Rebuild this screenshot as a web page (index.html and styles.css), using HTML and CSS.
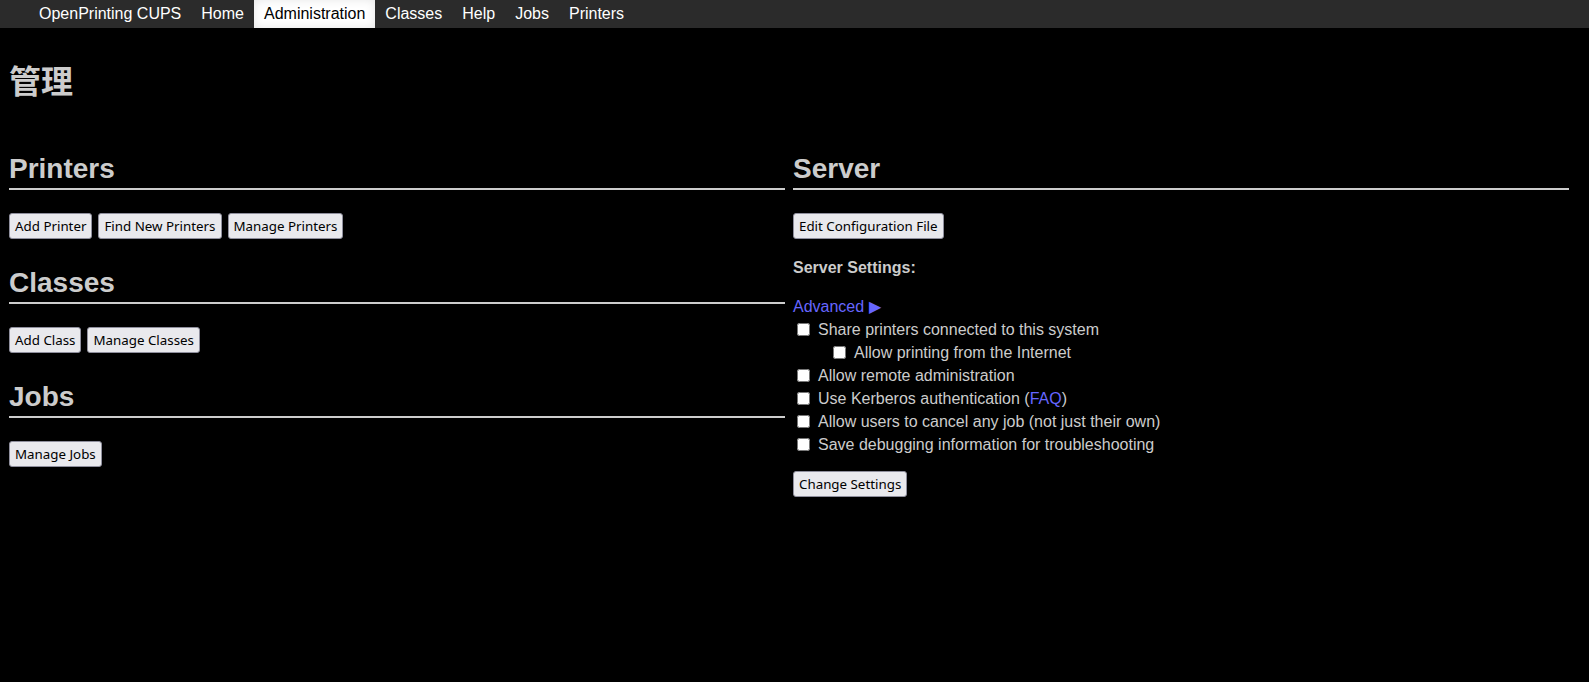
FILE: index.html
```html
<!DOCTYPE html>
<html lang="en">
<head>
<meta charset="utf-8">
<title>管理 - CUPS</title>
<link rel="stylesheet" href="styles.css">
</head>
<body>
<div class="header">
  <ul class="nav">
    <li><a href="#">OpenPrinting CUPS</a></li>
    <li><a href="#">Home</a></li>
    <li><a href="#" class="active">Administration</a></li>
    <li><a href="#">Classes</a></li>
    <li><a href="#">Help</a></li>
    <li><a href="#">Jobs</a></li>
    <li><a href="#">Printers</a></li>
  </ul>
</div>
<div class="main">
  <h1 class="page-title">管理</h1>
  <div class="row">
    <div class="col">
      <h2 class="title">Printers</h2>
      <div class="buttons">
        <button class="btn">Add Printer</button>
        <button class="btn">Find New Printers</button>
        <button class="btn">Manage Printers</button>
      </div>
      <h2 class="title">Classes</h2>
      <div class="buttons">
        <button class="btn">Add Class</button>
        <button class="btn">Manage Classes</button>
      </div>
      <h2 class="title">Jobs</h2>
      <div class="buttons">
        <button class="btn">Manage Jobs</button>
      </div>
    </div>
    <div class="col">
      <h2 class="title">Server</h2>
      <div class="buttons server-buttons">
        <button class="btn">Edit Configuration File</button>
      </div>
      <p class="settings-title">Server Settings:</p>
      <a class="advanced" href="#">Advanced ▶</a>
      <div class="checks">
        <label class="check"><input type="checkbox">Share printers connected to this system</label>
        <label class="check indent"><input type="checkbox">Allow printing from the Internet</label>
        <label class="check"><input type="checkbox">Allow remote administration</label>
        <label class="check"><input type="checkbox">Use Kerberos authentication (<a class="link" href="#">FAQ</a>)</label>
        <label class="check"><input type="checkbox">Allow users to cancel any job (not just their own)</label>
        <label class="check"><input type="checkbox">Save debugging information for troubleshooting</label>
      </div>
      <div class="buttons submit">
        <button class="btn">Change Settings</button>
      </div>
    </div>
  </div>
</div>
</body>
</html>
```
FILE: styles.css
```css
html, body {
  margin: 0;
  padding: 0;
  background: #000;
}
body {
  color: #ccc;
  font-family: "Liberation Sans", Arial, sans-serif;
  font-size: 16px;
}
.header {
  background: #2b2b2b;
  height: 28px;
}
.nav {
  list-style: none;
  margin: 0;
  padding: 0 0 0 29px;
  display: flex;
}
.nav a {
  display: block;
  padding: 5px 10px;
  color: #fff;
  text-decoration: none;
  line-height: 18px;
}
.nav a.active {
  background: #fff;
  color: #000;
  box-shadow: rgba(0,0,0,0.1) 0 0 10px 0 inset;
}
.main {
  padding: 0 20px 0 9px;
}
.page-title {
  margin: 0;
  padding-top: 31px;
  font-family: "Liberation Sans", "Noto Sans CJK SC", sans-serif;
  font-size: 32px;
  line-height: 46px;
  font-weight: bold;
  color: #ccc;
}
.row {
  display: grid;
  grid-template-columns: 1fr 1fr;
  column-gap: 8px;
  margin-top: 48px;
}
.col {
  min-width: 0;
}
h2.title {
  margin: 0;
  font-size: 28px;
  line-height: 32px;
  font-weight: bold;
  padding-bottom: 3px;
  border-bottom: 2px solid #ccc;
  color: #ccc;
}
.buttons {
  display: flex;
  gap: 6px;
  margin: 23px 0 28px;
}
.btn {
  box-sizing: border-box;
  font-family: "Noto Sans", sans-serif;
  font-size: 13.33px;
  color: #000;
  background: #e9e9ed;
  border: 1px solid #8f8f9d;
  border-radius: 3px;
  height: 26px;
  padding: 0 5px;
  line-height: 18px;
}
.buttons.server-buttons {
  margin-bottom: 20px;
}
.settings-title {
  margin: 0;
  font-weight: bold;
  line-height: 18px;
}
.advanced {
  display: block;
  margin-top: 21px;
  color: #66f;
  text-decoration: none;
  line-height: 18px;
}
.link {
  color: #66f;
  text-decoration: none;
}
.checks {
  margin-top: 2px;
  display: flex;
  flex-direction: column;
}
.check {
  display: flex;
  align-items: center;
  height: 23px;
  white-space: pre;
}
.check input {
  margin: 0 8px 0 4px;
  width: 13px;
  height: 13px;
}
.check.indent {
  padding-left: 36px;
}
.buttons.submit {
  margin-top: 15px;
}
```
